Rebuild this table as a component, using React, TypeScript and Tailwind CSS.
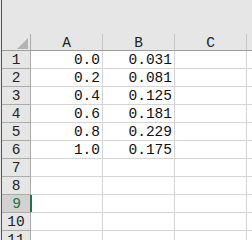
import React from "react";

const rows: [string, string][] = [
  ["0.0", "0.031"],
  ["0.2", "0.081"],
  ["0.4", "0.125"],
  ["0.6", "0.181"],
  ["0.8", "0.229"],
  ["1.0", "0.175"],
];

const font = { fontFamily: '"Liberation Mono", "DejaVu Sans Mono", monospace' };

function RowHeader({ n, active }: { n: number; active?: boolean }) {
  return (
    <div
      className={
        active
          ? "w-[29px] shrink-0 h-full flex items-center justify-center bg-[#d2d2d2] text-[#217346] border-b border-[#ababab] relative"
          : "w-[29px] shrink-0 h-full flex items-center justify-center bg-[#e6e6e6] text-[#222] border-b border-r border-[#ababab]"
      }
    >
      <span className="pt-[2px]">{n}</span>
      {active && <div className="absolute right-[-1px] top-0 bottom-0 w-[2px] bg-[#217346]" />}
    </div>
  );
}

function Cell({ value }: { value?: string }) {
  return (
    <div className="w-[72px] shrink-0 h-full border-r border-b border-[#d4d4d4] bg-white flex items-center justify-end pr-[2px] text-[#111]">
      <span className="pt-[2px]">{value ?? ""}</span>
    </div>
  );
}

export default function App() {
  const all: number[] = Array.from({ length: 11 }, (_, i) => i + 1);
  return (
    <div className="w-[252px] h-[240px] overflow-hidden flex bg-white text-[14.5px] leading-none" style={font}>
      <div className="w-px shrink-0 bg-[#e8e8e8]" />
      <div className="w-px shrink-0 bg-[#217346]" />
      <div className="flex-1 flex flex-col min-w-0">
        {/* ribbon strip above the sheet */}
        <div className="h-[34px] shrink-0 bg-[#e6e6e6]" />
        {/* column headers */}
        <div className="h-[17px] shrink-0 flex bg-[#e6e6e6] border-b border-[#9e9e9e]">
          <div className="w-[29px] shrink-0 h-full border-r border-[#ababab] relative">
            <svg className="absolute right-[2px] bottom-[1px]" width="11" height="11" viewBox="0 0 11 11">
              <polygon points="11,0 11,11 0,11" fill="#b4b4b4" />
            </svg>
          </div>
          {["A", "B", "C"].map((c) => (
            <div
              key={c}
              className="w-[72px] shrink-0 h-full border-r border-[#c6c6c6] flex items-center justify-center text-[#222]"
            >
              <span className="pt-[2px]">{c}</span>
            </div>
          ))}
          <div className="flex-1" />
        </div>
        {/* rows */}
        {all.map((n) => {
          const data = rows[n - 1];
          return (
            <div key={n} className="h-[18px] shrink-0 flex">
              <RowHeader n={n} active={n === 9} />
              <Cell value={data?.[0]} />
              <Cell value={data?.[1]} />
              <Cell />
              <div className="flex-1 h-full border-b border-[#d4d4d4]" />
            </div>
          );
        })}
      </div>
    </div>
  );
}
